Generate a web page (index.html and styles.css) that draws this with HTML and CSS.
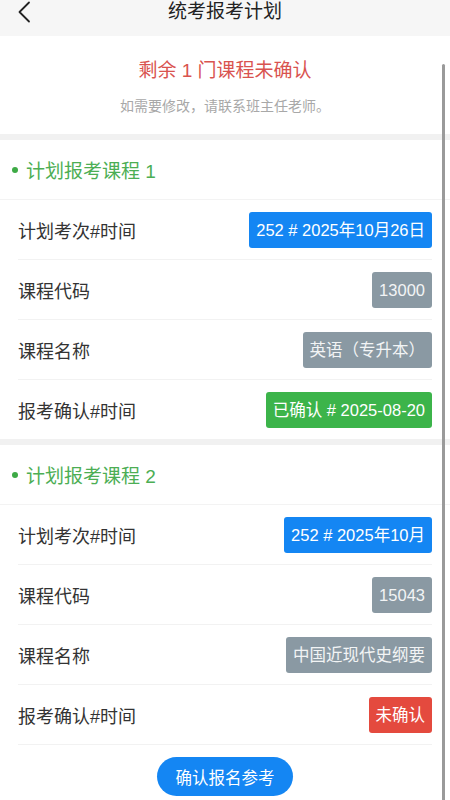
FILE: index.html
```html
<!DOCTYPE html>
<html lang="zh">
<head>
<meta charset="utf-8">
<title>统考报考计划</title>
<link rel="stylesheet" href="styles.css">
</head>
<body>
<div class="page">
  <header class="topbar">
    <span class="back">
      <svg width="14" height="22" viewBox="0 0 14 22"><path d="M12 1.5 L2.5 11 L12 20.5" fill="none" stroke="#222" stroke-width="1.8" stroke-linecap="round" stroke-linejoin="round"/></svg>
    </span>
    <h1 class="title">统考报考计划</h1>
  </header>

  <section class="summary">
    <p class="remain">剩余 1 门课程未确认</p>
    <p class="hint">如需要修改，请联系班主任老师。</p>
  </section>

  <section class="course">
    <div class="course-head"><span class="dot"></span>计划报考课程 1</div>
    <div class="row"><span class="label">计划考次#时间</span><span class="badge blue">252 # 2025年10月26日</span></div>
    <div class="row"><span class="label">课程代码</span><span class="badge gray">13000</span></div>
    <div class="row"><span class="label">课程名称</span><span class="badge gray">英语（专升本）</span></div>
    <div class="row last"><span class="label">报考确认#时间</span><span class="badge green">已确认 # 2025-08-20</span></div>
  </section>

  <section class="course">
    <div class="course-head"><span class="dot"></span>计划报考课程 2</div>
    <div class="row"><span class="label">计划考次#时间</span><span class="badge blue">252 # 2025年10月</span></div>
    <div class="row"><span class="label">课程代码</span><span class="badge gray">15043</span></div>
    <div class="row"><span class="label">课程名称</span><span class="badge gray">中国近现代史纲要</span></div>
    <div class="row"><span class="label">报考确认#时间</span><span class="badge red">未确认</span></div>
    <div class="actions"><button class="confirm">确认报名参考</button></div>
  </section>

  <div class="scrollbar"></div>
</div>
</body>
</html>
```

FILE: styles.css
```css
* { box-sizing: border-box; }
html, body { margin: 0; padding: 0; }
body {
  font-family: "Liberation Sans", "Noto Sans CJK SC", sans-serif;
  background: #ffffff;
  color: #333;
  width: 450px;
  height: 800px;
  overflow: hidden;
}
.page { position: relative; width: 450px; height: 800px; overflow: hidden; }

.topbar {
  height: 36px;
  background: #f6f6f6;
  position: relative;
  display: flex;
  justify-content: center;
}
.back {
  position: absolute;
  left: 17px;
  top: 1px;
  display: block;
  line-height: 0;
}
.title {
  margin: 0;
  font-size: 19px;
  font-weight: normal;
  line-height: 24px;
  color: #222;
}

.summary {
  height: 104px;
  padding-top: 22px;
  text-align: center;
  border-bottom: 6px solid #f1f1f1;
}
.remain {
  margin: 0;
  font-size: 19px;
  line-height: 26px;
  color: #d9534f;
}
.hint {
  margin: 12px 0 0;
  font-size: 14px;
  line-height: 20px;
  color: #a8a8a8;
}

.course { border-bottom: 6px solid #f1f1f1; }
.course:last-of-type { border-bottom: none; }
.course-head {
  height: 60px;
  display: flex;
  align-items: center;
  padding-left: 12px;
  font-size: 19px;
  color: #4cae54;
  border-bottom: 1px solid #f3f3f3;
}
.dot {
  width: 6px;
  height: 6px;
  border-radius: 50%;
  background: #3daa46;
  margin-right: 8px;
}
.row {
  height: 60px;
  margin: 0 18px;
  display: flex;
  align-items: center;
  justify-content: space-between;
  border-bottom: 1px solid #f2f2f2;
}
.row.last { border-bottom: none; height: 59px; }
.label {
  font-size: 18px;
  color: #333;
}
.badge {
  height: 36px;
  line-height: 36px;
  padding: 0 7px;
  border-radius: 3px;
  font-size: 16.5px;
  color: #fff;
  white-space: nowrap;
}
.blue { background: #1486f3; }
.gray { background: #8a99a3; color: #f2f4f5; }
.green { background: #3cb44a; }
.red { background: #e44a3e; }

.actions {
  display: flex;
  justify-content: center;
  padding-top: 12px;
}
.confirm {
  width: 136px;
  height: 39px;
  border: none;
  border-radius: 20px;
  background: #1486f3;
  color: #fff;
  font-family: "Liberation Sans", "Noto Sans CJK SC", sans-serif;
  font-size: 16.5px;
  padding: 0;
}

.scrollbar {
  position: absolute;
  right: 5px;
  top: 64px;
  width: 3px;
  height: 740px;
  background: #9a9a9a;
  border-radius: 2px;
}
```
